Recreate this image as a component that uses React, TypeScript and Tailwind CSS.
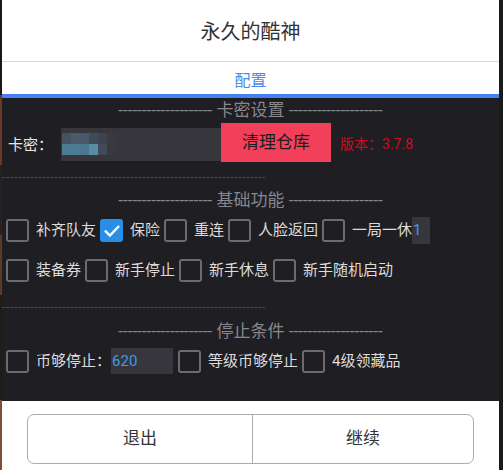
import React from "react";

const font = { fontFamily: 'Roboto, "Noto Sans CJK SC", sans-serif' };

const blur = [
  ["#44525e", "#4a5c6b", "#46586a", "#3f4c58", "#3b4450", "#39393f"],
  ["#4a7d95", "#4c7b92", "#4a778e", "#5a8ca3", "#3f4b57", "#38383e"],
];

function Box({ checked = false }: { checked?: boolean }) {
  if (checked) {
    return (
      <span className="flex h-[23px] w-[23px] shrink-0 items-center justify-center rounded-[3px] bg-[#2a8ee6]">
        <svg viewBox="0 0 24 24" className="h-[20px] w-[20px]">
          <path d="M4.5 12.5l5 5L19.5 7" fill="none" stroke="#ffffff" strokeWidth="2.8" strokeLinecap="square" />
        </svg>
      </span>
    );
  }
  return <span className="h-[23px] w-[23px] shrink-0 rounded-[3px] border-[2px] border-[#6c6b70]" />;
}

function Check({ label, checked, last }: { label: string; checked?: boolean; last?: boolean }) {
  return (
    <div className={["flex items-center", last ? "" : "mr-[4px]"].join(" ")}>
      <Box checked={checked} />
      <span className="ml-[7px] text-[15px] leading-none text-[#dcdcdc] whitespace-nowrap">{label}</span>
    </div>
  );
}

function SectionTitle({ title, className }: { title: string; className: string }) {
  return (
    <div className={["flex h-[24px] items-center justify-center whitespace-nowrap text-[17px] text-[#88878c]", className].join(" ")}>
      -------------------- {title} --------------------
    </div>
  );
}

function Dashes({ className }: { className: string }) {
  return (
    <div
      className={[
        "h-px w-[264px] bg-[repeating-linear-gradient(90deg,#49484d_0_3px,transparent_3px_4px)]",
        className,
      ].join(" ")}
    />
  );
}

export default function App() {
  return (
    <div className="flex h-[470px] w-[503px] overflow-hidden bg-[#161616]" style={font}>
      <div className="flex w-[2px] flex-col">
        <div className="h-[95px] bg-[#1b1715]" />
        <div className="h-[70px] bg-[#6b3a26]" />
        <div className="h-[70px] bg-[#2a2220]" />
        <div className="h-[60px] bg-[#5c3a28]" />
        <div className="h-[105px] bg-[#231b18]" />
        <div className="flex-1 bg-[#7a5038]" />
      </div>

      <div className="flex w-[497px] flex-col">
        <div className="flex h-[61px] items-center justify-center bg-white pt-[2px] text-[20px] text-[#333333]">
          永久的酷神
        </div>
        <div className="h-px bg-[#d8d8d8]" />
        <div className="flex h-[32px] items-center justify-center bg-white pt-[5px] text-[16px] text-[#4d88e8]">
          配置
        </div>
        <div className="h-[4px] bg-[#4482f2]" />

        <div className="flex flex-1 flex-col bg-[#1f1e23]">
          <SectionTitle title="卡密设置" className="mt-px" />

          <div className="flex h-[39px] items-center pl-[6px]">
            <span className="mt-[5px] text-[15px] text-[#e6e6e6]">卡密：</span>
            <div className="mt-[3px] ml-[8px] flex h-[33px] w-[160px] items-center bg-[#37363c] pl-px">
              <div className="grid grid-cols-6 blur-[0.6px]">
                {blur.flat().map((c, i) => (
                  <span key={i} className="h-[11px] w-[9px]" style={{ background: c }} />
                ))}
              </div>
            </div>
            <button className="flex h-[39px] w-[110px] items-center justify-center bg-[#f2405a] text-[17px] text-[#1c1c1c]">
              清理仓库
            </button>
            <span className="mt-[4px] ml-[9px] text-[14px] text-[#d20a20]">版本：3.7.8</span>
          </div>

          <Dashes className="mt-[15px]" />

          <SectionTitle title="基础功能" className="mt-[11px]" />

          <div className="mt-[4px] flex h-[27px] items-center pl-[4px]">
            <Check label="补齐队友" />
            <Check label="保险" checked />
            <Check label="重连" />
            <Check label="人脸返回" />
            <Check label="一局一休" last />
            <div className="flex h-[27px] w-[18px] items-center bg-[#37363c] pl-px text-[15px] text-[#3d9be9]">1</div>
          </div>

          <div className="mt-[13px] flex h-[27px] items-center pl-[4px]">
            <Check label="装备券" />
            <Check label="新手停止" />
            <Check label="新手休息" />
            <Check label="新手随机启动" last />
          </div>

          <Dashes className="mt-[23px]" />

          <SectionTitle title="停止条件" className="mt-[12px]" />

          <div className="mt-[4px] flex h-[26px] items-center pl-[4px]">
            <Check label="币够停止：" last />
            <div className="mr-[5px] flex h-[26px] w-[62px] items-center bg-[#37363c] pl-px text-[15px] text-[#3d9be9]">
              620
            </div>
            <Check label="等级币够停止" />
            <Check label="4级领藏品" last />
          </div>
        </div>

        <div className="flex h-[69px] flex-col bg-white px-[25px] pt-[13px]">
          <div className="flex h-[50px] overflow-hidden rounded-[7px] border border-[#acacac]">
            <button className="flex w-[225px] items-center justify-center border-r border-[#acacac] text-[17px] text-[#333333]">
              退出
            </button>
            <button className="flex flex-1 items-center justify-center text-[17px] text-[#333333]">
              继续
            </button>
          </div>
        </div>
      </div>

      <div className="w-[4px] bg-[#1a1a1a]" />
    </div>
  );
}
